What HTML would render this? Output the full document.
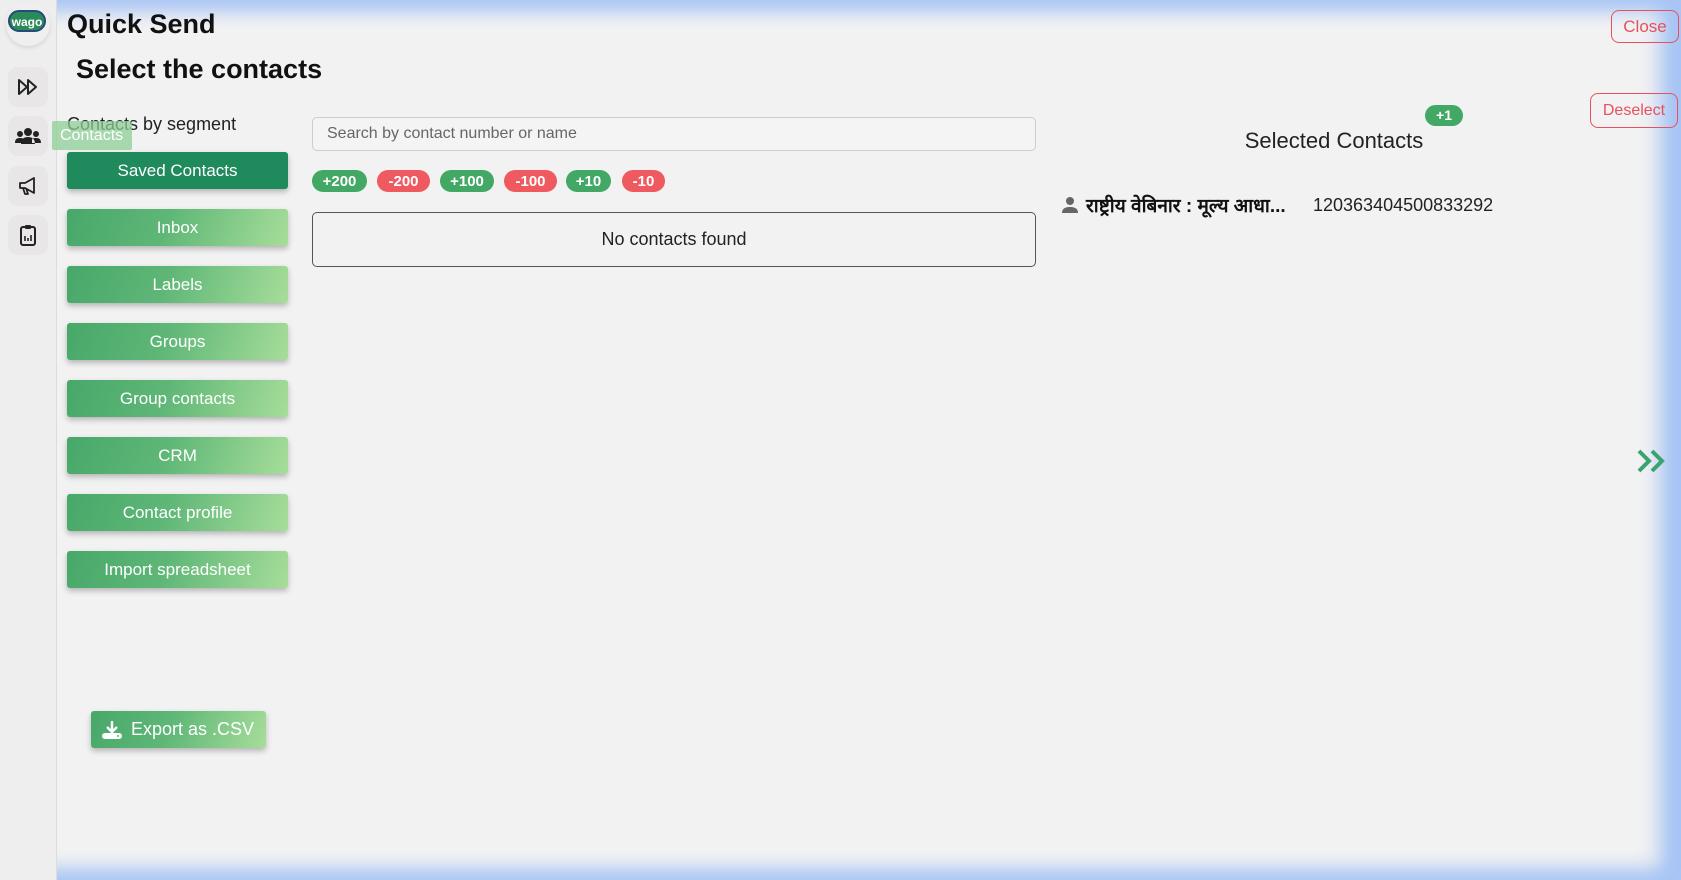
<!DOCTYPE html>
<html><head><meta charset="utf-8"><style>
*{box-sizing:border-box;margin:0;padding:0}
body{width:1681px;height:880px;background:#f2f2f2;font-family:"Liberation Sans","Noto Sans CJK SC",sans-serif;overflow:hidden;position:relative}
#wrap{position:absolute;left:0;top:0;width:1681px;height:880px;background:#f2f2f2;box-shadow:inset 0 0 22px 6px #a9c6f5, inset -14px 0 24px 4px #9dbdf5;overflow:hidden}
#side{position:absolute;left:0;top:0;width:57px;height:880px;border-right:1px solid #ddd;background:#eeeeee}
.ic{position:absolute;left:8px;width:40px;height:40px;border-radius:10px;background:#e8e6e6;display:flex;align-items:center;justify-content:center}
.abs{position:absolute}
.btn{position:absolute;left:67px;width:221px;height:37px;border-radius:3px;color:#fff;font-size:17px;display:flex;align-items:center;justify-content:center;background:linear-gradient(110deg,#47a86a 0%,#5fb777 45%,#a7dd9a 100%);box-shadow:0 3px 6px rgba(0,0,0,.25)}
.chip{position:absolute;top:170px;height:22px;border-radius:11px;color:#fff;font-size:15px;font-weight:bold;display:flex;align-items:center;justify-content:center}
.g{background:#43a866}.r{background:#ee5a5f}
</style></head><body>
<div id="wrap">
<div id="side">
 <div class="abs" style="left:6px;top:2px;width:44px;height:44px;border-radius:50%;background:#f0efef;box-shadow:0 2px 4px rgba(0,0,0,.1)"></div>
 <div class="abs" style="left:8px;top:10px;width:38px;height:22px;border-radius:11px;background:#2b8a5a;color:#fff;font-size:12px;font-weight:bold;text-align:center;line-height:20px;border:2px solid #264a7a">wago</div>
 <div class="ic" style="top:67px"><svg width="22" height="18" viewBox="0 0 22 18"><path d="M2 2l8 7-8 7zM11 2l8 7-8 7z" fill="none" stroke="#222" stroke-width="2" stroke-linejoin="round"/></svg></div>
 <div class="ic" style="top:116px"><svg width="26" height="18" viewBox="0 0 26 18"><circle cx="13" cy="5" r="4" fill="#222"/><circle cx="5" cy="7" r="3" fill="#222"/><circle cx="21" cy="7" r="3" fill="#222"/><path d="M6 17c0-5 3-7 7-7s7 2 7 7z M0 16c0-4 2-5 5-5s4 1 4 2v3z M26 16c0-4-2-5-5-5s-4 1-4 2v3z" fill="#222"/></svg></div>
 <div class="ic" style="top:166px"><svg width="22" height="20" viewBox="0 0 22 20"><path d="M3 7h5l9-5v15l-9-5H3z M6 12l2 6h3l-2-6" fill="none" stroke="#222" stroke-width="1.8" stroke-linejoin="round"/></svg></div>
 <div class="ic" style="top:215px"><svg width="18" height="22" viewBox="0 0 18 22"><rect x="2" y="3" width="14" height="18" rx="2" fill="none" stroke="#222" stroke-width="2"/><rect x="6" y="1" width="6" height="4" rx="1" fill="#222"/><path d="M6 17v-5M9 17v-3M12 17v-6" stroke="#222" stroke-width="1.6"/></svg></div>
</div>
<div class="abs" style="left:67px;top:9px;font-size:27px;font-weight:bold;color:#111">Quick Send</div>
<div class="abs" style="left:76px;top:54px;font-size:27px;font-weight:bold;color:#111">Select the contacts</div>
<div class="abs" style="left:1611px;top:10px;width:68px;height:33px;border:1px solid #e8505b;border-radius:8px;color:#e8505b;font-size:17px;text-align:center;line-height:31px">Close</div>
<div class="abs" style="left:67px;top:114px;font-size:18px;color:#222">Contacts by segment</div>
<div class="abs" style="left:52px;top:121px;width:80px;height:29px;background:rgba(140,205,150,.75);color:#fff;font-size:16px;line-height:29px;padding-left:8px;border-radius:2px">Contacts</div>
<div class="btn" style="top:152px;background:#1f8a5c">Saved Contacts</div>
<div class="btn" style="top:209px">Inbox</div>
<div class="btn" style="top:266px">Labels</div>
<div class="btn" style="top:323px">Groups</div>
<div class="btn" style="top:380px">Group contacts</div>
<div class="btn" style="top:437px">CRM</div>
<div class="btn" style="top:494px">Contact profile</div>
<div class="btn" style="top:551px">Import spreadsheet</div>
<div class="btn" style="left:91px;top:711px;width:175px;height:37px;font-size:18px;justify-content:flex-start;padding-left:10px"><svg width="22" height="20" viewBox="0 0 22 20" style="margin-right:8px"><path d="M11 1v10M6 7l5 5 5-5" fill="none" stroke="#fff" stroke-width="2.4"/><rect x="1" y="13" width="20" height="6" rx="3" fill="#fff"/><circle cx="17" cy="16" r="1" fill="#5fb777"/></svg>Export as .CSV</div>
<div class="abs" style="left:312px;top:117px;width:724px;height:34px;border:1px solid #ccc;border-radius:5px;background:#f4f4f4;font-size:16px;color:#666;line-height:32px;padding-left:14px">Search by contact number or name</div>
<div class="chip g" style="left:312px;width:55px">+200</div>
<div class="chip r" style="left:377px;width:53px">-200</div>
<div class="chip g" style="left:440px;width:54px">+100</div>
<div class="chip r" style="left:504px;width:53px">-100</div>
<div class="chip g" style="left:566px;width:45px">+10</div>
<div class="chip r" style="left:622px;width:43px">-10</div>
<div class="abs" style="left:312px;top:212px;width:724px;height:55px;border:1px solid #555;border-radius:5px;font-size:18px;color:#222;text-align:center;line-height:53px">No contacts found</div>
<div class="abs" style="left:1180px;top:128px;width:308px;text-align:center;font-size:22px;color:#222">Selected Contacts</div>
<div class="abs" style="left:1425px;top:105px;width:38px;height:21px;border-radius:11px;background:#43a866;color:#fff;font-size:14px;font-weight:bold;text-align:center;line-height:21px">+1</div>
<div class="abs" style="left:1590px;top:93px;width:88px;height:35px;border:1px solid #e8505b;border-radius:8px;color:#e8505b;font-size:16px;text-align:center;line-height:33px">Deselect</div>
<svg class="abs" style="left:1061px;top:196px" width="18" height="18" viewBox="0 0 18 18"><circle cx="9" cy="5" r="4" fill="#666"/><path d="M1 17c0-5 4-6 8-6s8 1 8 6z" fill="#666"/></svg>
<div class="abs" style="left:1086px;top:192px;font-size:19px;font-weight:bold;color:#111;font-family:'Liberation Sans','Noto Sans CJK SC','DejaVu Sans',sans-serif">राष्ट्रीय वेबिनार : मूल्य आधा...</div>
<div class="abs" style="left:1313px;top:195px;font-size:18px;color:#222">120363404500833292</div>
<svg class="abs" style="left:1636px;top:448px" width="32" height="26" viewBox="0 0 32 26"><path d="M3 3l10 10-10 10M16 3l10 10-10 10" fill="none" stroke="#3aa370" stroke-width="4"/></svg>
</div>
</body></html>
